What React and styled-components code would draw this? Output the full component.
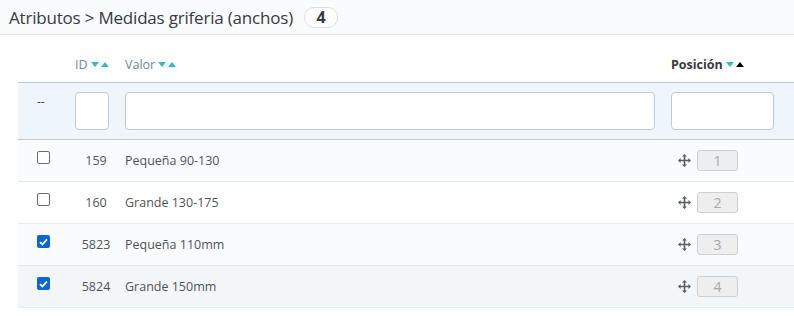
import React from "react";
import styled, { createGlobalStyle } from "styled-components";

const Global = createGlobalStyle`
  body {
    margin: 0;
    background: #fff;
    font-family: "Open Sans", "Liberation Sans", sans-serif;
    color: #363a41;
  }
`;

const rows = [
  { id: 159, valor: "Pequeña 90-130", pos: 1, checked: false, bg: "#fafbfc" },
  { id: 160, valor: "Grande 130-175", pos: 2, checked: false, bg: "#ffffff" },
  { id: 5823, valor: "Pequeña 110mm", pos: 3, checked: true, bg: "#fafbfc" },
  { id: 5824, valor: "Grande 150mm", pos: 4, checked: true, bg: "#f3f6f9" },
];

const SortArrows = ({ active }) => (
  <Arrows>
    <svg width="8" height="5" viewBox="0 0 8 5">
      <path d="M0 0h8L4 5z" fill="#3ab5c9" />
    </svg>
    <svg width="8" height="5" viewBox="0 0 8 5">
      <path d="M0 5h8L4 0z" fill={active ? "#000" : "#3ab5c9"} />
    </svg>
  </Arrows>
);

const DragIcon = () => (
  <svg width="13" height="13" viewBox="0 0 13 13">
    <path
      d="M6.5 0L9 2.6H7.3V5.7H10.4V4L13 6.5L10.4 9V7.3H7.3V10.4H9L6.5 13L4 10.4H5.7V7.3H2.6V9L0 6.5L2.6 4V5.7H5.7V2.6H4z"
      fill="#5a5e63"
    />
  </svg>
);

const Check = ({ checked }) => (
  <Box checked={checked}>
    {checked && (
      <svg width="9" height="8" viewBox="0 0 9 8">
        <path d="M1 4.2L3.4 6.5L8 1.3" stroke="#fff" strokeWidth="1.8" fill="none" />
      </svg>
    )}
  </Box>
);

export default function App() {
  return (
    <>
      <Global />
      <Header>
        <Title>Atributos &gt; Medidas griferia (anchos)</Title>
        <Badge>4</Badge>
      </Header>
      <Table>
        <HeadRow>
          <Cell />
          <Cell>
            <HeadLabel>ID</HeadLabel>
            <SortArrows />
          </Cell>
          <Cell>
            <HeadLabel>Valor</HeadLabel>
            <SortArrows />
          </Cell>
          <LastCell>
            <HeadLabel bold>Posición</HeadLabel>
            <SortArrows active />
          </LastCell>
        </HeadRow>
        <FilterRow>
          <Cell><Dash>--</Dash></Cell>
          <Cell><Input /></Cell>
          <Cell><Input /></Cell>
          <LastCell><Input /></LastCell>
        </FilterRow>
        {rows.map((r) => (
          <DataRow key={r.id} bg={r.bg}>
            <Cell><Check checked={r.checked} /></Cell>
            <IdCell>{r.id}</IdCell>
            <Cell>{r.valor}</Cell>
            <PosCell>
              <DragIcon />
              <PosBox>{r.pos}</PosBox>
            </PosCell>
          </DataRow>
        ))}
      </Table>
    </>
  );
}

const Header = styled.div`
  height: 35px;
  background: #fafbfc;
  border-bottom: 1px solid #dfe3e6;
  display: flex;
  align-items: center;
  padding-left: 9px;
  box-sizing: border-box;
`;

const Title = styled.h1`
  margin: 0;
  font-size: 17px;
  font-weight: 400;
  color: #363a41;
  letter-spacing: -0.2px;
`;

const Badge = styled.span`
  margin-left: 11px;
  width: 32px;
  height: 19px;
  border: 1px solid #dcdfe2;
  border-radius: 10px;
  background: #fff;
  display: flex;
  align-items: center;
  justify-content: center;
  font-size: 16px;
  font-weight: 700;
  color: #363a41;
`;

const Table = styled.div`
  margin: 15px 0 0 18px;
`;

const Row = styled.div`
  display: grid;
  grid-template-columns: 49px 50px 546px 1fr;
  align-items: center;
`;

const HeadRow = styled(Row)`
  height: 33px;
  padding-bottom: 3px;
  border-bottom: 1px solid #bbcdd2;
  box-sizing: border-box;
`;

const FilterRow = styled(Row)`
  height: 57px;
  background: #eef6fb;
  border-bottom: 1px solid #bbcdd2;
  box-sizing: border-box;
`;

const DataRow = styled(Row)`
  height: 42px;
  background: ${(p) => p.bg};
  border-bottom: 1px solid #e6eaed;
  box-sizing: border-box;
  font-size: 12.5px;
  color: #4f5357;
`;

const Cell = styled.div`
  display: flex;
  align-items: center;
  padding: 0 8px;
  &:first-child {
    padding-left: 19px;
  }
`;

const LastCell = styled(Cell)`
  padding-right: 20px;
`;

const IdCell = styled(Cell)`
  justify-content: center;
  padding: 0 0 0 8px;
`;

const PosCell = styled(Cell)`
  padding-left: 15px;
  gap: 6px;
`;

const HeadLabel = styled.span`
  font-size: 12.5px;
  font-weight: ${(p) => (p.bold ? 700 : 400)};
  color: ${(p) => (p.bold ? "#363a41" : "#6c868e")};
`;

const Arrows = styled.span`
  display: inline-flex;
  align-items: center;
  gap: 2px;
  margin-left: 3px;
`;

const Dash = styled.span`
  font-size: 12px;
  color: #363a41;
  margin-top: -20px;
`;

const Input = styled.input`
  width: 100%;
  height: 38px;
  box-sizing: border-box;
  border: 1px solid #bbcdd2;
  border-radius: 4px;
  background: #fff;
  margin: 0;
`;

const Box = styled.span`
  width: 13px;
  height: 13px;
  box-sizing: border-box;
  border-radius: 2px;
  border: ${(p) => (p.checked ? "none" : "1px solid #6b6e72")};
  background: ${(p) => (p.checked ? "#0b66d6" : "#fff")};
  display: flex;
  align-items: center;
  justify-content: center;
  margin-top: -6px;
`;

const PosBox = styled.span`
  width: 41px;
  height: 21px;
  box-sizing: border-box;
  border: 1px solid #cdd0d3;
  border-radius: 3px;
  background: #eeeeee;
  color: #a7a9ab;
  font-size: 14px;
  display: flex;
  align-items: center;
  justify-content: center;
`;
